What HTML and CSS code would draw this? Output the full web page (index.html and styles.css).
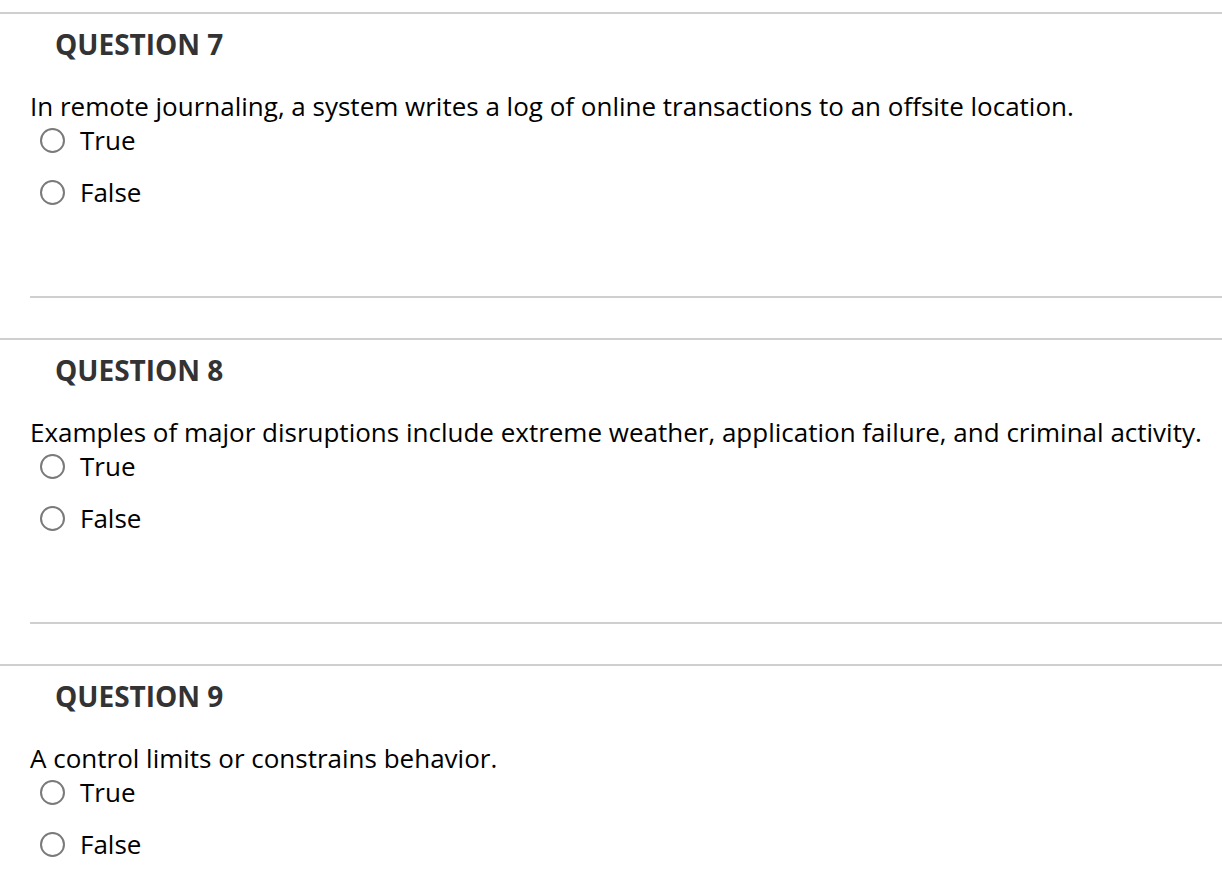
FILE: index.html
```html
<!DOCTYPE html>
<html>
<head>
<meta charset="utf-8">
<link rel="stylesheet" href="styles.css">
</head>
<body>
<div class="page">
  <section class="question">
    <h2 class="q-title">QUESTION 7</h2>
    <p class="q-text">In remote journaling, a system writes a log of online transactions to an offsite location.</p>
    <div class="option"><span class="radio"></span><span class="label">True</span></div>
    <div class="option option-gap"><span class="radio"></span><span class="label">False</span></div>
    <hr class="sep">
  </section>
  <section class="question">
    <h2 class="q-title">QUESTION 8</h2>
    <p class="q-text">Examples of major disruptions include extreme weather, application failure, and criminal activity.</p>
    <div class="option"><span class="radio"></span><span class="label">True</span></div>
    <div class="option option-gap"><span class="radio"></span><span class="label">False</span></div>
    <hr class="sep">
  </section>
  <section class="question">
    <h2 class="q-title">QUESTION 9</h2>
    <p class="q-text">A control limits or constrains behavior.</p>
    <div class="option"><span class="radio"></span><span class="label">True</span></div>
    <div class="option option-gap"><span class="radio"></span><span class="label">False</span></div>
    <hr class="sep">
  </section>
</div>
</body>
</html>
```
FILE: styles.css
```css
html, body {
  margin: 0;
  padding: 0;
  background: #ffffff;
}
body {
  font-family: "Open Sans", "DejaVu Sans", sans-serif;
  color: #000;
  overflow: hidden;
}
.page {
  padding-top: 12px;
}
.question {
  border-top: 2px solid #cfcfcf;
  padding-top: 12px;
}
.q-title {
  margin: 0 0 0 55px;
  font-size: 28px;
  line-height: 36px;
  font-weight: 700;
  color: #333333;
}
.q-text {
  margin: 27px 0 0 30px;
  font-size: 26px;
  line-height: 34px;
}
.option {
  display: flex;
  align-items: center;
  margin-left: 40px;
  font-size: 26px;
  line-height: 34px;
}
.option-gap {
  margin-top: 18px;
}
.radio {
  width: 25px;
  height: 25px;
  border: 2px solid #7a7a7a;
  border-radius: 50%;
  box-sizing: border-box;
  margin-right: 15px;
  flex: none;
}
.sep {
  margin: 87px 0 40px 30px;
  border: 0;
  border-top: 2px solid #cfcfcf;
  height: 0;
}
```
